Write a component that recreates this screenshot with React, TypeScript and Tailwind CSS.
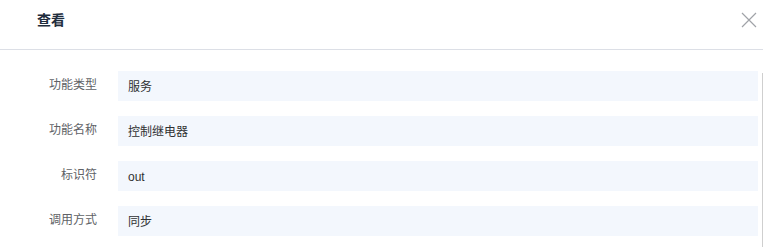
import React from 'react';

const rows = [
  { label: '功能类型', value: '服务' },
  { label: '功能名称', value: '控制继电器' },
  { label: '标识符', value: 'out' },
  { label: '调用方式', value: '同步' },
];

const App: React.FC = () => {
  return (
    <div
      className="w-[763px] h-[247px] bg-white overflow-hidden relative"
      style={{ fontFamily: '"Liberation Sans", "Noto Sans CJK SC", sans-serif' }}
    >
      <div className="h-[50px] flex items-center justify-between pl-[37px] pr-[6px] border-b border-[#dcdfe6]">
        <span className="text-[14px] font-bold text-[#1f2d3d] leading-none -mt-[10px]">查看</span>
        <button className="w-[16px] h-[16px] -mt-[10px] text-[#a0a3a8]" aria-label="Close">
          <svg viewBox="0 0 16 16" className="w-[16px] h-[16px]" fill="none" stroke="currentColor" strokeWidth="1.2">
            <path d="M1 1 L15 15 M15 1 L1 15" />
          </svg>
        </button>
      </div>

      <div className="pt-[21px] pr-[5px] flex flex-col gap-[15px]">
        {rows.map((row) => (
          <div key={row.label} className="flex items-start h-[30px]">
            <div className="w-[118px] pr-[21px] text-right text-[12px] leading-none text-[#606266] pt-[8px]">
              {row.label}
            </div>
            <div className="flex-1 h-[30px] bg-[#f3f7fd] flex items-center pl-[10px] text-[12px] text-[#303133] pt-[2px]">
              {row.value}
            </div>
          </div>
        ))}
      </div>

      <div className="absolute right-0 top-[73px] w-[1px] h-[174px] bg-[#cfcfcf]" />
    </div>
  );
};

export default App;
